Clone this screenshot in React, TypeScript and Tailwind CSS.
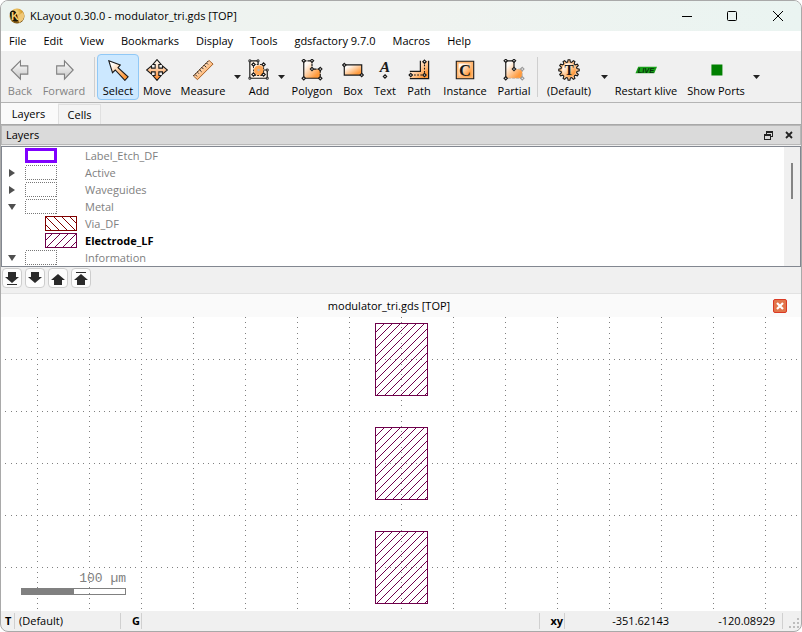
import { useId, type ReactNode } from "react";

const INK = "#1a1a1a";
const ELECTRODE = "#6e004b";

function Gradients() {
  return (
    <svg className="absolute h-0 w-0" aria-hidden="true">
      <defs>
        <linearGradient id="orange" x1="0" y1="0" x2="1" y2="1">
          <stop offset="0.2" stopColor="#fffaf5" />
          <stop offset="0.8" stopColor="#ff9a3c" />
        </linearGradient>
        <linearGradient id="orangeDown" x1="0" y1="0" x2="0" y2="1">
          <stop offset="0.15" stopColor="#fff6ec" />
          <stop offset="0.85" stopColor="#ff9540" />
        </linearGradient>
        <linearGradient id="grey" x1="0" y1="0" x2="0" y2="1">
          <stop offset="0" stopColor="#ffffff" />
          <stop offset="1" stopColor="#c4c4c4" />
        </linearGradient>
        <radialGradient id="gold" cx="0.4" cy="0.3" r="0.75">
          <stop offset="0" stopColor="#ffe9a0" />
          <stop offset="0.55" stopColor="#d9a032" />
          <stop offset="1" stopColor="#5a3a08" />
        </radialGradient>
      </defs>
    </svg>
  );
}

function Icon({ children }: { children: ReactNode }) {
  return (
    <svg width="24" height="24" viewBox="0 0 24 24" fill="none" aria-hidden="true">
      {children}
    </svg>
  );
}

function Handles({ at, color = INK }: { at: number[][]; color?: string }) {
  return (
    <>
      {at.map(([x, y]) => (
        <path
          key={`${x}-${y}`}
          d={`M${x} ${y - 1.8}L${x + 1.8} ${y}L${x} ${y + 1.8}L${x - 1.8} ${y}Z`}
          fill="#fff"
          stroke={color}
          strokeWidth="1.3"
        />
      ))}
    </>
  );
}

const BackIcon = () => (
  <Icon>
    <path d="M2.500 12L12.500 2V7.500H20.500V16.500H12.500V22Z" fill="url(#grey)" stroke="#808080" strokeWidth="1.2" />
  </Icon>
);
const ForwardIcon = () => (
  <Icon>
    <path d="M22 12L12.500 2V7.500H4V16.500H12.500V22Z" fill="url(#grey)" stroke="#808080" strokeWidth="1.2" />
  </Icon>
);
const SelectIcon = () => (
  <Icon>
    <path d="M2 2L14.500 6.500L12 9.500L23 19.500L19.500 23.300L9 12L6 15Z" fill="url(#orange)" stroke={INK} strokeWidth="1.2" />
  </Icon>
);
const MoveIcon = () => (
  <Icon>
    <path
      d="M12 0.700L16.500 6H14V10H18V7.500L23.300 12L18 16.500V14H14V18H16.500L12 23.300L7.500 18H10V14H6V16.500L0.700 12L6 7.500V10H10V6H7.500Z"
      fill="url(#orangeDown)"
      stroke={INK}
      strokeWidth="1.2"
    />
  </Icon>
);
const MeasureIcon = () => (
  <Icon>
    <path d="M1.500 18.500L18.500 1.500L23 5.500L6 22.500Z" fill="url(#orange)" stroke="#a05a20" />
    <path d="M3.500 17L5.500 19M6 14.500L7.500 16M8.500 12L10.500 14M11 9.500L12.500 11M13.500 7L15.500 9M16 4.500L17.500 6" stroke={INK} />
    <path d="M1.500 18.500L18.500 1.500" stroke={INK} strokeDasharray="2 1" />
  </Icon>
);
const AddIcon = () => (
  <Icon>
    <path d="M2 2H11V12H21V21H2Z" fill="#fff3e6" stroke={INK} strokeWidth="1.3" />
    <path d="M6 6H17V18H6Z" fill="url(#orange)" stroke={INK} strokeDasharray="2 1.500" />
    <circle cx="11.500" cy="12" r="5" fill="#ffa654" />
    <circle cx="11.500" cy="12" r="1.300" fill="#b8b8b8" />
    <Handles at={[[6, 6], [17, 6], [6, 17], [17, 17]]} />
    <path d="M1 1h2v2h-2zM10 1h2v2h-2zM1 20h2v2h-2zM20 20h2v2h-2zM20 11h2v2h-2z" fill="#fff" stroke={INK} />
  </Icon>
);
const PolygonIcon = () => (
  <Icon>
    <path d="M3 2H12V11H21V21H3Z" fill="url(#orange)" />
    <path d="M3 2V21H21" stroke={INK} strokeWidth="1.3" />
    <path d="M3 2H12V11H21V21" stroke={INK} strokeWidth="1.3" strokeDasharray="3 1" />
    <Handles at={[[3, 2], [12, 2], [12, 11], [21, 11], [21, 21], [3, 21]]} />
  </Icon>
);
const BoxIcon = () => (
  <Icon>
    <path d="M2.500 6.500H21.500V17.500H2.500Z" fill="url(#orange)" stroke={INK} strokeWidth="1.3" />
    <Handles at={[[2.5, 6.5], [21.5, 17.5]]} />
  </Icon>
);
const TextIcon = () => (
  <Icon>
    <text x="12" y="14" textAnchor="middle" fontFamily="Liberation Serif, serif" fontSize="17" fontStyle="italic" fontWeight="700" fill={INK}>
      A
    </text>
    <Handles at={[[12, 19]]} />
  </Icon>
);
const PathIcon = () => (
  <Icon>
    <path d="M2 13.500H13.500V2H22.500V21.500H2Z" fill="url(#orange)" />
    <path d="M2 13.500H13.500V2M22.500 2V21.500H2" stroke={INK} strokeWidth="1.3" />
    <path d="M3 17.500H18V3" stroke={INK} strokeDasharray="2 1.500" strokeWidth="1.2" />
    <Handles at={[[3, 17.5], [18, 17.5], [18, 3]]} />
  </Icon>
);
const InstanceIcon = () => (
  <Icon>
    <path d="M2.500 2.500H21.500V21.500H2.500Z" fill="#ffb56e" stroke={INK} strokeWidth="1.2" />
    <path d="M5 5H19V19H5Z" fill="url(#orange)" />
    <text x="12" y="18" textAnchor="middle" fontFamily="Liberation Serif, serif" fontSize="18" fontWeight="700" fill={INK}>
      C
    </text>
  </Icon>
);
const PartialIcon = () => (
  <Icon>
    <path d="M3 2H12V11H21V21H3Z" fill="url(#orange)" />
    <path d="M12 11H21V21H3" stroke="#b5b5b5" strokeDasharray="3 1.500" />
    <path d="M3 21V2H12V11" stroke={INK} strokeWidth="1.3" />
    <Handles at={[[21, 11], [21, 21]]} color="#9a9a9a" />
    <Handles at={[[3, 2], [12, 2], [12, 11], [3, 21]]} />
  </Icon>
);

const gear = Array.from({ length: 12 }, (_, i) => {
  const point = (r: number, deg: number) => {
    const a = ((i * 30 + deg) * Math.PI) / 180;
    return `${(12 + r * Math.sin(a)).toFixed(2)} ${(12 - r * Math.cos(a)).toFixed(2)}`;
  };
  return `${point(8.8, -10)}L${point(11.2, -5)}L${point(11.2, 5)}L${point(8.8, 10)}`;
}).join("L");

const DefaultIcon = () => (
  <Icon>
    <path d={`M${gear}Z`} fill="#ffc48c" stroke={INK} strokeWidth="1.2" />
    <circle cx="12" cy="12" r="7.500" fill="url(#orange)" />
    <text x="12" y="17" textAnchor="middle" fontFamily="Liberation Serif, serif" fontSize="15" fontWeight="700" fill={INK}>
      T
    </text>
  </Icon>
);
const LiveIcon = () => (
  <Icon>
    <path d="M3.500 8.500H24L21 15.500H0.500Z" fill="#18a018" />
    <text x="12" y="15" textAnchor="middle" fontFamily="Liberation Sans, sans-serif" fontSize="8" fontStyle="italic" fontWeight="700" fill="#04330a">
      LIVE
    </text>
  </Icon>
);
const PortsIcon = () => (
  <Icon>
    <path d="M7 6H19V18H7Z" fill="#008000" />
  </Icon>
);

function Tool({ label, width, icon, disabled, active }: { label: string; width: string; icon: ReactNode; disabled?: boolean; active?: boolean }) {
  return (
    <button
      type="button"
      disabled={disabled}
      aria-pressed={active}
      className={`flex h-[46px] shrink-0 flex-col items-center gap-0.5 rounded-sm border pt-1 leading-4 whitespace-nowrap ${width} ${
        active ? "border-[#90c8f6] bg-[#cce8ff]" : "border-transparent"
      } ${disabled ? "text-[#838383]" : "text-black"}`}
    >
      {icon}
      <span>{label}</span>
    </button>
  );
}

function MenuArrow({ label }: { label: string }) {
  return (
    <button type="button" aria-label={label} className="flex h-[46px] w-3 shrink-0 items-center justify-center">
      <svg width="7" height="4" viewBox="0 0 7 4" aria-hidden="true">
        <path d="M0 0H7L3.500 4Z" fill="#222" />
      </svg>
    </button>
  );
}

const Separator = () => <div className="h-10 w-px shrink-0 bg-[#cfcfcf]" />;

function HatchPattern({ id, color, back, shift = 0 }: { id: string; color: string; back?: boolean; shift?: number }) {
  return (
    <pattern id={id} width="8" height="8" x={shift} patternUnits="userSpaceOnUse">
      {Array.from({ length: 8 }, (_, i) => (
        <rect key={i} x={back ? i : 7 - i} y={i} width="1" height="1" fill={color} />
      ))}
    </pattern>
  );
}

function Swatch({ kind }: { kind: string }) {
  const id = useId();
  if (kind === "label") return <span className="h-[15px] w-8 border-3 border-[#8000ff] bg-white" />;
  if (kind === "group") {
    return (
      <svg width="32" height="15" shapeRendering="crispEdges" aria-hidden="true">
        <rect x="0.500" y="0.500" width="31" height="14" fill="none" stroke="#777" strokeDasharray="1 1" />
      </svg>
    );
  }
  const back = kind === "via";
  const color = back ? "#800000" : ELECTRODE;
  return (
    <svg width="32" height="15" shapeRendering="crispEdges" aria-hidden="true">
      <defs>
        <HatchPattern id={id} color={color} back={back} />
      </defs>
      <rect x="0.500" y="0.500" width="31" height="14" fill={`url(#${id})`} stroke={color} />
    </svg>
  );
}

const layers = [
  { name: "Label_Etch_DF", kind: "label" },
  { name: "Active", kind: "group", arrow: "closed" },
  { name: "Waveguides", kind: "group", arrow: "closed" },
  { name: "Metal", kind: "group", arrow: "open" },
  { name: "Via_DF", kind: "via", child: true },
  { name: "Electrode_LF", kind: "electrode", child: true, current: true },
  { name: "Information", kind: "group", arrow: "open" },
];

function LayerRow({ layer }: { layer: (typeof layers)[number] }) {
  return (
    <li className="flex h-[17px] items-center">
      <span className="flex w-[23px] shrink-0 justify-center pr-[3px]">
        {layer.arrow && (
          <svg width="8" height="8" viewBox="0 0 8 8" aria-hidden="true">
            <path d={layer.arrow === "open" ? "M0 1H8L4 7Z" : "M1 0L7 4L1 8Z"} fill="#4f4f4f" />
          </svg>
        )}
      </span>
      <span className={`flex w-[60px] shrink-0 ${layer.child ? "pl-5" : ""}`}>
        <Swatch kind={layer.kind} />
      </span>
      <span className={layer.current ? "font-bold text-black" : "text-[#808080]"}>{layer.name}</span>
    </li>
  );
}

const moveButtons = [
  { label: "Move to bottom", d: "M4 2H12V7H15L8 13L1 7H4ZM3 14H13V15H3Z" },
  { label: "Move down", d: "M4 2H12V7H15L8 13L1 7H4Z" },
  { label: "Move up", d: "M4 15H12V10H15L8 4L1 10H4Z" },
  { label: "Move to top", d: "M4 15H12V10H15L8 4L1 10H4ZM3 2H13V3H3Z" },
];

/* Grid lines sit 52 pixels apart, with ten dots for each interval. */
const PITCH = 52;
const dots = (() => {
  const parts: string[] = [];
  const place = (origin: number, k: number) => Math.floor(origin + (k * PITCH) / 10);
  const columns = Array.from({ length: 40 }, (_, i) => 36 + i * PITCH);
  const rows = Array.from({ length: 30 }, (_, i) => 42 + i * PITCH);
  for (const x of columns) for (let k = -8; k < 240; k++) parts.push(`M${x} ${place(42, k)}h1v1h-1z`);
  for (const y of rows) for (let k = -6; k < 360; k++) parts.push(`M${place(36, k)} ${y}h1v1h-1z`);
  return parts.join("");
})();

function LayoutCanvas() {
  return (
    <svg className="block h-full w-full" shapeRendering="crispEdges" role="img" aria-label="Layout view">
      <defs>
        <HatchPattern id="canvasHatch" color={ELECTRODE} shift={-2} />
      </defs>
      <path d={dots} fill="#808080" />
      {[6, 110, 214].map((y) => (
        <rect key={y} x="374.500" y={y + 0.5} width="52" height="72" fill="url(#canvasHatch)" stroke={ELECTRODE} />
      ))}
    </svg>
  );
}

const StatusLine = () => <span className="h-4 w-px shrink-0 bg-[#d0d0d0]" />;

export default function App() {
  return (
    <div className="flex h-screen flex-col overflow-hidden rounded-lg border border-[#a9a9a9] bg-[#f0f0f0] font-['Open_Sans','Noto_Sans',sans-serif] text-[11px] leading-4 text-black">
      <Gradients />
      <header className="flex h-[30px] shrink-0 items-center bg-linear-to-r from-[#ecf3f0] via-[#f0f3f0] to-[#eaf4f1] pl-2">
        <svg width="16" height="16" viewBox="0 0 16 16" aria-hidden="true">
          <circle cx="8" cy="8" r="7.500" fill="url(#gold)" />
          <path d="M0.800 5C3 0.500 7 3 8 6L9 13C5 15 1 12 0.800 5Z" fill="#1c1406" />
          <path d="M9 8L14 4L15.500 8L14 12L10 15Z" fill="#f0c878" />
          <text x="2" y="12" fontFamily="Liberation Sans, sans-serif" fontSize="11" fontWeight="700" fill="#f7d070">
            K
          </text>
        </svg>
        <h1 className="flex-1 pl-[5px] text-[11px]">KLayout 0.30.0 - modulator_tri.gds [TOP]</h1>
        <button type="button" aria-label="Minimize" className="flex w-[45px] justify-center">
          <svg width="10" height="10" aria-hidden="true"><path d="M0 5.500H10" stroke="#000" /></svg>
        </button>
        <button type="button" aria-label="Maximize" className="flex w-[46px] justify-center">
          <svg width="10" height="10" aria-hidden="true"><rect x="0.500" y="0.500" width="9" height="9" rx="1" fill="none" stroke="#000" /></svg>
        </button>
        <button type="button" aria-label="Close" className="flex w-[46px] justify-center">
          <svg width="10" height="10" aria-hidden="true"><path d="M0 0L10 10M10 0L0 10" stroke="#000" /></svg>
        </button>
      </header>

      <nav className="flex h-[21px] shrink-0 items-center gap-[17px] border-b border-[#f0f0f0] bg-white pl-2">
        {["File", "Edit", "View", "Bookmarks", "Display", "Tools", "gdsfactory 9.7.0", "Macros", "Help"].map((item) => (
          <button key={item} type="button" className="whitespace-nowrap">{item}</button>
        ))}
      </nav>

      <div className="flex h-[51px] shrink-0 items-center overflow-hidden border-b border-[#b4b4b4] pl-[3px]">
        <Tool label="Back" width="w-8" icon={<BackIcon />} disabled />
        <Tool label="Forward" width="w-14" icon={<ForwardIcon />} disabled />
        <div className="flex shrink-0 px-0.5"><Separator /></div>
        <Tool label="Select" width="w-[42px]" icon={<SelectIcon />} active />
        <Tool label="Move" width="w-9" icon={<MoveIcon />} />
        <Tool label="Measure" width="w-14" icon={<MeasureIcon />} />
        <MenuArrow label="Measure options" />
        <Tool label="Add" width="w-8" icon={<AddIcon />} />
        <MenuArrow label="Add options" />
        <Tool label="Polygon" width="w-[50px]" icon={<PolygonIcon />} />
        <Tool label="Box" width="w-8" icon={<BoxIcon />} />
        <Tool label="Text" width="w-8" icon={<TextIcon />} />
        <Tool label="Path" width="w-9" icon={<PathIcon />} />
        <Tool label="Instance" width="w-14" icon={<InstanceIcon />} />
        <Tool label="Partial" width="w-[42px]" icon={<PartialIcon />} />
        <div className="flex shrink-0 px-0.5"><Separator /></div>
        <Tool label="(Default)" width="w-[58px]" icon={<DefaultIcon />} />
        <MenuArrow label="Technology options" />
        <Tool label="Restart klive" width="w-[72px]" icon={<LiveIcon />} />
        <Tool label="Show Ports" width="w-[68px]" icon={<PortsIcon />} />
        <MenuArrow label="Port options" />
      </div>

      <div className="flex h-[22px] shrink-0 items-end border-b border-[#a8a8a8]" role="tablist">
        <button type="button" role="tab" aria-selected="true" className="h-[21px] w-[57px] bg-[#fafafa] pr-0.5">Layers</button>
        <button type="button" role="tab" aria-selected="false" className="h-5 w-[43px] border border-b-0 border-[#e0e0e0] bg-[#f4f4f4]">Cells</button>
      </div>

      <section className="shrink-0">
        <div className="flex h-5 items-center border border-[#b8b8b8] bg-[#dadada] pr-[7px] pl-1">
          <h2 className="flex-1">Layers</h2>
          <button type="button" aria-label="Float panel" className="mr-3">
            <svg width="9" height="9" viewBox="0 0 9 9" shapeRendering="crispEdges" fill="none" aria-hidden="true">
              <path d="M2.500 3V0.500H8.500V5.500H6M2 1.500H9M0.500 3.500H6.500V8.500H0.500ZM0 4.500H6" stroke="#222" />
            </svg>
          </button>
          <button type="button" aria-label="Close panel">
            <svg width="8" height="8" viewBox="0 0 8 8" aria-hidden="true"><path d="M1 1L7 7M7 1L1 7" stroke="#222" strokeWidth="1.8" /></svg>
          </button>
        </div>
        <div className="mt-px flex border border-[#828790] bg-white">
          <ul className="flex-1">
            {layers.map((layer) => <LayerRow key={layer.name} layer={layer} />)}
          </ul>
          <div className="w-4 bg-[#f0f0f0] pt-4 pl-[7px]">
            <div className="h-9 w-0.5 bg-[#858585]" />
          </div>
        </div>
        <div className="flex h-[26px] gap-[3px] pt-px pl-px">
          {moveButtons.map((button) => (
            <button key={button.label} type="button" aria-label={button.label} className="flex h-5 w-5 items-center justify-center rounded border border-[#cdcdcd] bg-[#fdfdfd]">
              <svg width="16" height="16" viewBox="0 0 16 16" className="shrink-0" aria-hidden="true">
                <path d={button.d} fill="#2b2b2b" />
              </svg>
            </button>
          ))}
        </div>
      </section>

      <main className="flex min-h-0 flex-1 flex-col">
        <div className="flex h-6 shrink-0 items-center border-t border-[#e2e2e2] bg-[#fafafa] pr-3.5 pl-1">
          <h2 className="flex-1 text-center">modulator_tri.gds [TOP]</h2>
          <button type="button" aria-label="Close view">
            <svg width="14" height="14" viewBox="0 0 14 14" aria-hidden="true">
              <rect x="0.500" y="0.500" width="13" height="13" rx="1.500" fill="#e2764c" stroke="#da3a24" />
              <path d="M4 4L10 10M10 4L4 10" stroke="#fff" strokeWidth="2.2" />
            </svg>
          </button>
        </div>
        <div className="relative min-h-0 flex-1 overflow-hidden bg-white">
          <LayoutCanvas />
          <div className="absolute bottom-4 left-5 w-[105px] text-right font-['Liberation_Mono',monospace] text-[13px] text-[#808080]">
            100 µm
            <div className="mt-px h-[7px] border border-[#808080]">
              <div className="h-full w-1/2 bg-[#808080]" />
            </div>
          </div>
        </div>
      </main>

      <footer className="flex h-5 shrink-0 items-center">
        <span className="w-[13px] shrink-0 pl-1 font-bold">T</span>
        <StatusLine />
        <span className="w-[105px] pl-1">(Default)</span>
        <StatusLine />
        <span className="w-5 pr-px text-right font-bold">G</span>
        <StatusLine />
        <span className="flex-1" />
        <StatusLine />
        <span className="w-6 pr-px text-right font-bold">xy</span>
        <StatusLine />
        <span className="w-[104px] text-right">-351.62143</span>
        <span className="w-[106px] text-right">-120.08929</span>
        <span className="ml-[7px] flex"><StatusLine /></span>
        <svg width="18" height="18" viewBox="0 0 18 18" aria-hidden="true">
          <path d="M14 6h2v2h-2zM14 10h2v2h-2zM10 10h2v2h-2zM14 14h2v2h-2zM10 14h2v2h-2zM6 14h2v2h-2z" fill="#bdbdbd" />
        </svg>
      </footer>
    </div>
  );
}
